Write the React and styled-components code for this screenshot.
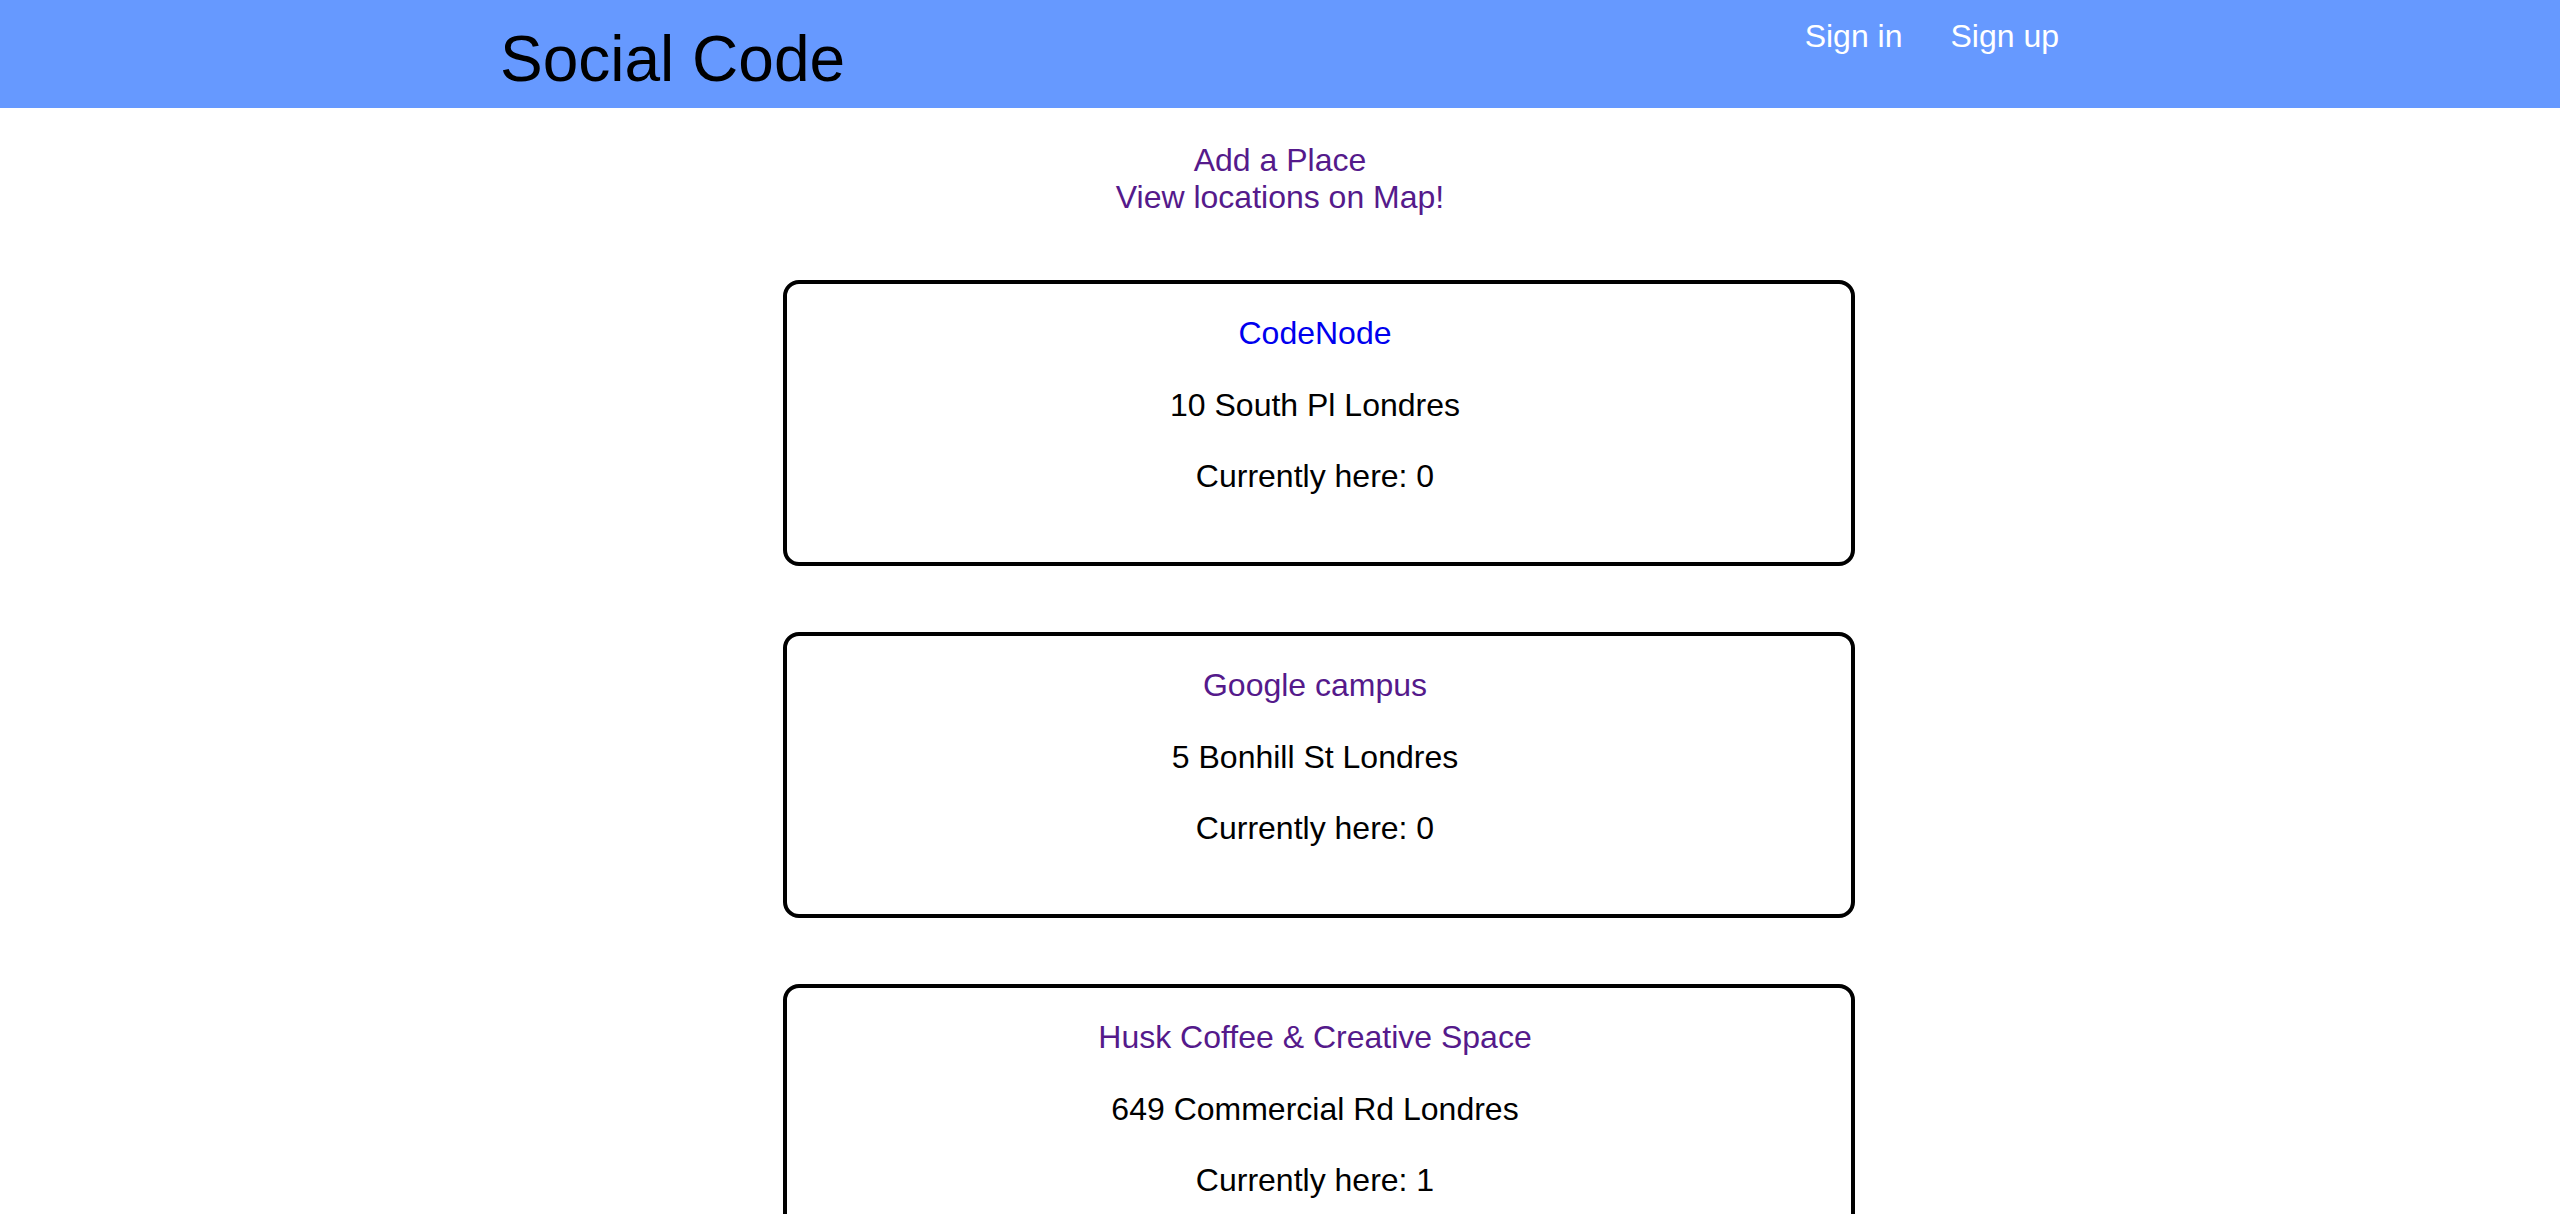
import React from "react";
import styled, {createGlobalStyle} from "styled-components";

const GlobalStyle = createGlobalStyle`
    html, body {
        margin: 0;
        padding: 0;
        background: #ffffff;
        font-family: "Liberation Sans", Arial, Helvetica, sans-serif;
    }
`;

const Header = styled.header`
    height: 108px;
    background: #6699ff;
    display: flex;
    justify-content: space-between;
    align-items: flex-start;
    padding: 0 501px 0 500px;
    box-sizing: border-box;
`;

const Brand = styled.h1`
    margin: 27px 0 0;
    font-size: 64px;
    line-height: 64px;
    font-weight: 400;
    color: #000000;
`;

const NavLinks = styled.nav`
    display: flex;
    gap: 48px;
    margin-top: 20px;
`;

const NavLink = styled.a`
    font-size: 32px;
    line-height: 32px;
    color: #ffffff;
    text-decoration: none;
`;

const Main = styled.main`
    display: flex;
    flex-direction: column;
    align-items: center;
    gap: 66px;
    padding: 34px 0 66px;
`;

const Actions = styled.div`
    display: flex;
    flex-direction: column;
    align-items: center;
    margin-bottom: -2px;
`;

const ActionLink = styled.a`
    font-size: 32px;
    line-height: 37px;
    color: #551a8b;
    text-decoration: none;
`;

const Card = styled.section`
    width: 1072px;
    height: 286px;
    margin-left: 78px;
    box-sizing: border-box;
    border: 4px solid #000000;
    border-radius: 16px;
    padding: 31px 8px 0 0;
    display: flex;
    flex-direction: column;
    align-items: center;
    gap: 34.5px;
`;

const PlaceName = styled.a`
    font-size: 32px;
    line-height: 37px;
    color: ${(p) => (p.$visited ? "#551a8b" : "#0000ee")};
    text-decoration: none;
`;

const Line = styled.p`
    margin: 0;
    font-size: 32px;
    line-height: 37px;
    color: #000000;
`;

const places = [
    {name: "CodeNode", address: "10 South Pl Londres", here: 0, visited: false},
    {name: "Google campus", address: "5 Bonhill St Londres", here: 0, visited: true},
    {name: "Husk Coffee & Creative Space", address: "649 Commercial Rd Londres", here: 1, visited: true}
];

export default function App() {
    return (
        <>
            <GlobalStyle />
            <Header>
                <Brand>Social Code</Brand>
                <NavLinks>
                    <NavLink href="#">Sign in</NavLink>
                    <NavLink href="#">Sign up</NavLink>
                </NavLinks>
            </Header>
            <Main>
                <Actions>
                    <ActionLink href="#">Add a Place</ActionLink>
                    <ActionLink href="#">View locations on Map!</ActionLink>
                </Actions>
                {places.map((place) => (
                    <Card key={place.name}>
                        <PlaceName href="#" $visited={place.visited}>
                            {place.name}
                        </PlaceName>
                        <Line>{place.address}</Line>
                        <Line>Currently here: {place.here}</Line>
                    </Card>
                ))}
            </Main>
        </>
    );
}
